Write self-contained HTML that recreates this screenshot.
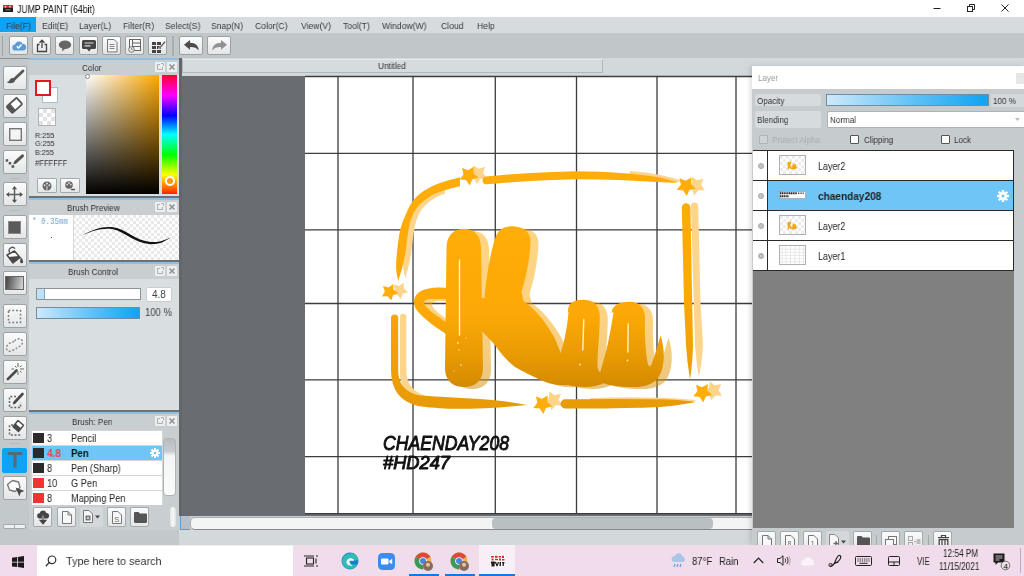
<!DOCTYPE html>
<html>
<head>
<meta charset="utf-8">
<title>JUMP PAINT</title>
<style>
*{box-sizing:border-box;margin:0;padding:0}
html,body{width:1024px;height:576px;overflow:hidden;background:#c3c8cb;font-family:"Liberation Sans",sans-serif;color:#222}
.abs{position:absolute}
svg{position:absolute;overflow:visible}
.tx{position:absolute;white-space:nowrap;transform-origin:0 0;line-height:1;will-change:transform}
#titlebar{left:0;top:0;width:1024px;height:17px;background:#fff}
#menubar{left:0;top:17px;width:1024px;height:16px;background:#d6dbde}
#menubar .tx{top:4px;font-size:9.5px;color:#3a3a3a;transform:scaleX(.905)}
#toolbar{left:0;top:33px;width:1024px;height:25px;background:#c1c6c9}
.tb{position:absolute;top:3px;width:19px;height:19px;border:1px solid #9ba0a3;border-radius:2px;background:linear-gradient(#fcfcfc,#e3e5e6)}
#lefttools{left:0;top:58px;width:29px;height:487px;background:#c3c8cb}
.lt{position:absolute;left:2.5px;width:24.5px;height:24px;border:1px solid #9da2a5;border-radius:2px;background:linear-gradient(#fbfbfb,#e4e6e7)}
.lsep{position:absolute;left:10px;width:10px;height:1px;background:#b4b9bc}
.pline{position:absolute;left:29px;width:150px;height:2px;background:#6e7174}
.phead{position:absolute;left:29px;width:150px;height:17px;background:#c9ced1;border-top:2px solid #8fbfe2}
.phead .tx{top:3px;font-size:9.5px;color:#333;transform:scaleX(.86)}
.pbody{position:absolute;left:29px;width:150px;background:#d9dee1}
.pb{position:absolute;top:2px;width:10px;height:10px;background:#eceeef;border-radius:1px}
#canvasarea{left:182px;top:58px;width:570px;height:472px;background:#696c70}
#taskbar{left:0;top:545px;width:1024px;height:31px;background:#f1dcec}
#layerpanel{left:752px;top:66px;width:272px;height:479px;background:#c6cbce;box-shadow:-2px 0 5px rgba(0,0,0,.13)}
</style>
</head>
<body>
<!-- TITLE BAR -->
<div id="titlebar" class="abs">
  <svg style="left:3px;top:4.500px" width="10" height="7" viewBox="0 0 10 7"><rect x="0" y="0" width="10" height="3.200" fill="#d8242b"/><rect x="0" y="3" width="10" height="4" fill="#1d1d1d"/><rect x="1.500" y=".8" width="1.800" height="1.600" fill="#fff" opacity=".7"/><rect x="6" y=".8" width="1.800" height="1.600" fill="#fff" opacity=".7"/><rect x="2.500" y="4.200" width="5" height="1.200" fill="#777"/></svg>
  <div class="tx" style="left:17px;top:3.5px;font-size:11px;color:#111;transform:scaleX(.79)">JUMP PAINT (64bit)</div>
  <svg style="left:930px;top:0" width="94" height="17" viewBox="0 0 94 17"><g stroke="#222" stroke-width="1" fill="none"><path d="M3.500 8.500h7"/><rect x="37.500" y="6.500" width="5" height="5"/><path d="M39.500 6.500v-2h5v5h-2"/><path d="M71.500 4.500l7 7M78.500 4.500l-7 7"/></g></svg>
</div>
<!-- MENU BAR -->
<div id="menubar" class="abs">
  <div class="abs" style="left:0;top:0;width:36px;height:15px;background:#0fa3f3"></div>
  <div class="tx" style="left:6px">File(F)</div><div class="tx" style="left:42px">Edit(E)</div><div class="tx" style="left:79px">Layer(L)</div><div class="tx" style="left:123px">Filter(R)</div><div class="tx" style="left:165px">Select(S)</div><div class="tx" style="left:211px">Snap(N)</div><div class="tx" style="left:255px">Color(C)</div><div class="tx" style="left:301px">View(V)</div><div class="tx" style="left:343px">Tool(T)</div><div class="tx" style="left:382px">Window(W)</div><div class="tx" style="left:441px">Cloud</div><div class="tx" style="left:477px">Help</div>
</div>
<!-- TOOLBAR -->
<div id="toolbar" class="abs">
  <div class="abs" style="left:2px;top:3px;width:1px;height:20px;background:#9da2a5"></div>
  <div class="tb" style="left:9px"><svg style="left:2px;top:3px" width="14" height="11" viewBox="0 0 14 11"><path d="M3.500 10.500a3 3 0 0 1-.4-6 4 4 0 0 1 7.600-.6 3.300 3.300 0 0 1 .3 6.600z" fill="#5b9bd5"/><path d="M4.800 6.200l1.700 1.800 3-3.400" stroke="#fff" stroke-width="1.500" fill="none"/></svg></div>
  <div class="tb" style="left:32.2px"><svg style="left:3px;top:2px" width="12" height="14" viewBox="0 0 12 14"><path d="M3.500 5.500h-2v7h9v-7h-2" stroke="#444" stroke-width="1.300" fill="none"/><path d="M6 9V1.500M3.500 3.800L6 1.200l2.500 2.600" stroke="#444" stroke-width="1.300" fill="none"/></svg></div>
  <div class="tb" style="left:55.4px"><svg style="left:2px;top:3px" width="14" height="12" viewBox="0 0 14 12"><ellipse cx="7" cy="4.800" rx="6.200" ry="4.300" fill="#666"/><path d="M4.500 7.500l-.5 4 3.500-3z" fill="#666"/></svg></div>
  <div class="tb" style="left:78.6px"><svg style="left:2px;top:3px" width="14" height="12" viewBox="0 0 14 12"><path d="M1.500 0h11a1.500 1.500 0 0 1 1.500 1.500v6a1.500 1.500 0 0 1-1.500 1.500H9l-2 2.500L5 9H1.500A1.500 1.500 0 0 1 0 7.500v-6A1.500 1.500 0 0 1 1.500 0z" fill="#444"/><path d="M2.500 3h9M2.500 5.800h6" stroke="#ddd" stroke-width="1.200"/></svg></div>
  <div class="tb" style="left:101.8px"><svg style="left:4px;top:2px" width="11" height="14" viewBox="0 0 11 14"><path d="M.5.500h6.500l3 3v9.500h-9.500z" fill="#f4f4f4" stroke="#777" stroke-width="1"/><path d="M2.500 5.500h5M2.500 7.500h5M2.500 9.500h5" stroke="#888" stroke-width="1"/></svg></div>
  <div class="tb" style="left:125px"><svg style="left:2px;top:2px" width="14" height="14" viewBox="0 0 14 14"><rect x="1.500" y=".5" width="11" height="11" fill="#f6f6f6" stroke="#666"/><path d="M4.500 .5v11M4.500 4h8M4.500 7.500h8" stroke="#666" stroke-width="1"/><circle cx="3.500" cy="10.500" r="2.800" fill="#eee" stroke="#666" stroke-width=".9"/><path d="M3.500 9v1.600h1.300" stroke="#666" stroke-width=".8" fill="none"/></svg></div>
  <div class="tb" style="left:148.2px"><svg style="left:2px;top:2px" width="15" height="14" viewBox="0 0 15 14"><g fill="#444"><rect x="1" y="3" width="4" height="3"/><rect x="6" y="3" width="4" height="3"/><rect x="1" y="7" width="4" height="3"/><rect x="6" y="7" width="4" height="3"/><rect x="1" y="11" width="4" height="3"/><rect x="6" y="11" width="4" height="3"/></g><path d="M8 8.500l5.500-6.500 1.300 1.200-5.600 6.300-1.800.6z" fill="#555" stroke="#e8e8e8" stroke-width=".6"/></svg></div>
  <div class="abs" style="left:171.5px;top:3px;width:2px;height:20px;background:#a9aeb1"></div>
  <div class="tb" style="left:179px;width:24px"><svg style="left:4px;top:3px" width="15" height="11" viewBox="0 0 15 11"><path d="M0 4.800L6 0v2.800c5 0 8.500 2.700 8.800 7.700C12.800 7.800 10 6.800 6 6.900v2.800z" fill="#4c4c4c"/></svg></div>
  <div class="tb" style="left:207px;width:24px"><svg style="left:4px;top:3px" width="15" height="11" viewBox="0 0 15 11"><path d="M15 4.800L9 0v2.800C4 2.800.5 5.500.2 10.500 2.200 7.800 5 6.800 9 6.900v2.800z" fill="#909396"/></svg></div>
</div>
<!-- LEFT TOOLS -->
<div id="lefttools" class="abs">
  <div class="abs" style="left:0;top:0;width:30px;height:1px;background:#8b9093"></div>
  <div class="lt" style="top:8px"><svg style="left:0;top:0" width="22" height="22" viewBox="0 0 22 22"><path d="M19 4L10.500 12" stroke="#555" stroke-width="2.800" stroke-linecap="round"/><path d="M10.200 11.300c-1.800-.9-4 0-4.600 1.600-.4 1.100-1.400 1.700-2.900 2 2.200 1.700 6 1.700 7.800-.2 1-1.100.8-2.500-.3-3.400z" fill="#555"/></svg></div>
  <div class="lt" style="top:36px"><svg style="left:0;top:0" width="22" height="22" viewBox="0 0 22 22"><g transform="translate(10.400,10.400) rotate(-42)"><rect x="-6.800" y="-4.300" width="13.600" height="8.600" rx="1.200" fill="#fdfdfd" stroke="#555" stroke-width="1.800"/><rect x="-6.800" y="-4.300" width="4.800" height="8.600" fill="#555"/></g></svg></div>
  <div class="lt" style="top:64px"><svg style="left:5px;top:5px" width="13" height="13" viewBox="0 0 13 13"><rect x=".7" y=".7" width="11.600" height="11.600" fill="#f4f4f4" stroke="#777" stroke-width="1.400"/></svg></div>
  <div class="lt" style="top:92px"><svg style="left:0;top:0" width="22" height="22" viewBox="0 0 22 22"><path d="M18.500 4.800L11.800 10.800" stroke="#555" stroke-width="3" stroke-linecap="round"/><path d="M9.300 13.200l.9-2.900 2.200 2.100z" fill="#555"/><g fill="#555"><rect x="1.700" y="8.200" width="2.500" height="2.500"/><rect x="4.700" y="11" width="2.500" height="2.500"/><rect x="7.600" y="14.200" width="2.600" height="2.600"/></g></svg></div>
  <div class="lsep" style="top:120px"></div>
  <div class="lt" style="top:124px"><svg style="left:2px;top:2.500px" width="17" height="17" viewBox="0 0 17 17"><path d="M8.500 1.500v14M1.500 8.500h14" stroke="#606060" stroke-width="1.500"/><path d="M8.500 0l2.600 3.200H5.900zM8.500 17l2.600-3.200H5.900zM0 8.500l3.200-2.600v5.200zM17 8.500l-3.200-2.600v5.200z" fill="#555"/></svg></div>
  <div class="lsep" style="top:152px"></div>
  <div class="lt" style="top:157px"><svg style="left:4.500px;top:4.500px" width="13" height="13" viewBox="0 0 13 13"><rect x=".5" y=".5" width="12" height="12" fill="#5a5a5a" stroke="#888" stroke-width="1"/></svg></div>
  <div class="lt" style="top:185px"><svg style="left:1px;top:2px" width="19" height="19" viewBox="0 0 19 19"><path d="M4.800 6.500a3 3 0 0 1 5.200-3.800" stroke="#555" stroke-width="1.300" fill="none"/><path d="M2 9l7.500-4 5.500 6.500-7 5.500z" fill="#fff" stroke="#4a4a4a" stroke-width="1.500" stroke-linejoin="round"/><path d="M3 11l11-1 1 1.500-7 5.500z" fill="#4a4a4a"/><path d="M15.800 11c1.500 1.500 2.300 3.400 2.300 4.700a1.500 1.500 0 0 1-3 0c0-1.200.3-2.800.7-4.700z" fill="#4a4a4a"/></svg></div>
  <div class="lt" style="top:213px"><div class="abs" style="left:1.500px;top:4px;width:18.500px;height:14px;border:1px solid #666;background:linear-gradient(100deg,#444,#d8d8d8)"></div></div>
  <div class="lsep" style="top:241px"></div>
  <div class="lt" style="top:246px"><svg style="left:3px;top:3.500px" width="15" height="15" viewBox="0 0 15 15"><rect x="1.500" y="1.500" width="12" height="12" fill="none" stroke="#777" stroke-width="1.500" stroke-dasharray="1.800 2"/></svg></div>
  <div class="lt" style="top:274px"><svg style="left:1px;top:3px" width="19" height="17" viewBox="0 0 19 17"><path d="M9.500 5C12 2 17 2 17.500 5.500c.4 3-3 5-5.500 6.500s-6 4-8.500 3S.8 11 3 8.500 7.500 7 9.500 5z" fill="none" stroke="#888" stroke-width="1.400" stroke-dasharray="2 1.700"/></svg></div>
  <div class="lt" style="top:302px"><svg style="left:2px;top:1.500px" width="18" height="18" viewBox="0 0 18 18"><path d="M1.800 16.200L10.500 7.500" stroke="#4a4a4a" stroke-width="2.600" stroke-linecap="round"/><path d="M12 0v4M12 8.500v3.500M8 6h-2.500M14 6h4M9 3l1.500 1.500M15.500 2.500L14 4M15.500 9.500L14 8" stroke="#666" stroke-width="1"/></svg></div>
  <div class="lt" style="top:330px"><svg style="left:3px;top:3px" width="18" height="17" viewBox="0 0 18 17"><path d="M9 4.500H2.500v11h11v-5" fill="none" stroke="#666" stroke-width="1.500" stroke-dasharray="2 1.700"/><path d="M7.500 10.500L15.500 2" stroke="#4a4a4a" stroke-width="2.600" stroke-linecap="round"/><path d="M5.800 12.500l.8-2.600 1.900 1.800z" fill="#4a4a4a"/></svg></div>
  <div class="lt" style="top:358px"><svg style="left:3px;top:2px" width="18" height="18" viewBox="0 0 18 18"><path d="M6 6H2.500v10h10v-2.500" fill="none" stroke="#666" stroke-width="1.500" stroke-dasharray="2 1.700"/><path d="M11 1.500l5.500 4.700-5 6.300-5.500-4.700z" fill="#fff" stroke="#4a4a4a" stroke-width="1.500" stroke-linejoin="round"/><path d="M6 7.800l2.500-3.200L14 9.300l-2.500 3.200z" fill="#4a4a4a"/></svg></div>
  <div class="lsep" style="top:385px"></div>
  <div class="lt" style="top:389.500px;left:2px;width:25px;height:25px;background:#0fa3f3;border-color:#0fa3f3"><svg style="left:4px;top:3px" width="16" height="16" viewBox="0 0 16 16"><path d="M.8 0h14.400v3H9.600V15.500H6.400V3H.8z" fill="#546b7b"/></svg></div>
  <div class="lt" style="top:418px"><svg style="left:2px;top:2px" width="20" height="20" viewBox="0 0 20 20"><path d="M6.500 1.500l6 1.500 1.500 5.500-5 4-5.500-1.500L1.500 5.500z" fill="#fff" stroke="#777" stroke-width="1.300" stroke-linejoin="round"/><path d="M9.500 8.500l9 3.500-3.800 1.500-1.200 4z" fill="#4a4a4a"/></svg></div>
  <div class="abs" style="left:3px;top:466px;width:23px;height:5px;border:1px solid #a4a9ac;border-radius:2px;background:#f0f1f2"></div>
  <div class="abs" style="left:14px;top:467px;width:1px;height:3px;background:#a4a9ac"></div>
</div>
<!-- LEFT PANELS -->
<div id="leftpanels">
  <div class="abs" style="left:178.500px;top:58px;width:3.500px;height:458px;background:#63666a"></div>
  <!-- Color -->
  <div class="phead" style="top:58px"><div class="tx" style="left:53px">Color</div>
    <div class="pb" style="left:126px"><svg style="left:2px;top:1px" width="7" height="7" viewBox="0 0 7 7"><path d="M3 1.500H.5v5h5V4" stroke="#aab0b3" fill="none"/><path d="M4 .5h2.500V3" stroke="#aab0b3" fill="none"/></svg></div>
    <div class="pb" style="left:138px"><svg style="left:2px;top:2px" width="6" height="6" viewBox="0 0 6 6"><path d="M.5.500l5 5M5.500.5l-5 5" stroke="#8e9497" stroke-width="1.600"/></svg></div>
  </div>
  <div class="pbody" style="top:75px;height:121px">
    <div class="abs" style="left:13px;top:12px;width:16px;height:16px;background:#fff;border:1px solid #9fc3c9"></div>
    <div class="abs" style="left:6px;top:5px;width:16px;height:16px;background:#fff;border:2px solid #e01b1b"></div>
    <svg style="left:9px;top:33px" width="18" height="18" viewBox="0 0 18 18"><rect x=".5" y=".5" width="17" height="17" fill="#fff" stroke="#aeb3b6"/><g fill="#e2e2e2"><rect x="5" y="1" width="4" height="4"/><rect x="13" y="1" width="4" height="4"/><rect x="1" y="5" width="4" height="4"/><rect x="9" y="5" width="4" height="4"/><rect x="5" y="9" width="4" height="4"/><rect x="13" y="9" width="4" height="4"/><rect x="1" y="13" width="4" height="4"/><rect x="9" y="13" width="4" height="4"/></g></svg>
    <div class="tx" style="left:6px;top:57px;font-size:8px;color:#333;transform:scaleX(.9)">R:255</div>
    <div class="tx" style="left:6px;top:65px;font-size:8px;color:#333;transform:scaleX(.9)">G:255</div>
    <div class="tx" style="left:6px;top:73.500px;font-size:8px;color:#333;transform:scaleX(.9)">B:255</div>
    <div class="tx" style="left:6px;top:83.500px;font-size:8.500px;color:#333;transform:scaleX(.9)">#FFFFFF</div>
    <div class="abs" style="left:8px;top:103px;width:20px;height:15px;border:1px solid #a4a9ac;border-radius:1px;background:linear-gradient(#fbfbfb,#e4e6e7)"><svg style="left:4px;top:2px" width="10" height="10" viewBox="0 0 10 10"><circle cx="5" cy="5" r="4.500" fill="#666"/><circle cx="5" cy="2.500" r="1" fill="#ddd"/><circle cx="2.600" cy="4.200" r="1" fill="#ddd"/><circle cx="7.400" cy="4.200" r="1" fill="#ddd"/><path d="M5 5v4.500" stroke="#ddd" stroke-width="1"/></svg></div>
    <div class="abs" style="left:31px;top:103px;width:20px;height:15px;border:1px solid #a4a9ac;border-radius:1px;background:linear-gradient(#fbfbfb,#e4e6e7)"><svg style="left:4px;top:2px" width="12" height="10" viewBox="0 0 12 10"><circle cx="4" cy="4" r="3.800" fill="#666"/><circle cx="4" cy="2" r=".9" fill="#ddd"/><circle cx="2.200" cy="3.600" r=".9" fill="#ddd"/><circle cx="5.800" cy="3.600" r=".9" fill="#ddd"/><path d="M6 8.500h4" stroke="#555" stroke-width="1.400"/></svg></div>
    <div class="abs" style="left:57px;top:0;width:73px;height:119px;background:linear-gradient(to bottom,rgba(0,0,0,0),#000),linear-gradient(to right,#fff,#ffa800)"></div>
    <div class="abs" style="left:56px;top:-1px;width:5px;height:5px;border-radius:50%;border:1px solid #888;background:#fff"></div>
    <div class="abs" style="left:133px;top:0;width:15px;height:119px;background:linear-gradient(to bottom,#ff0030 0%,#ff00ff 17%,#0000ff 34%,#00ffff 50%,#00ff00 67%,#ffff00 84%,#ff2000 100%)"></div>
    <div class="abs" style="left:136px;top:101px;width:10px;height:10px;border-radius:50%;border:2px solid #fff;background:#ff9800"></div>
  </div>
  <div class="pline" style="top:196px"></div>
  <!-- Brush Preview -->
  <div class="phead" style="top:198px"><div class="tx" style="left:38px">Brush Preview</div>
    <div class="pb" style="left:126px"><svg style="left:2px;top:1px" width="7" height="7" viewBox="0 0 7 7"><path d="M3 1.500H.5v5h5V4" stroke="#aab0b3" fill="none"/><path d="M4 .5h2.500V3" stroke="#aab0b3" fill="none"/></svg></div>
    <div class="pb" style="left:138px"><svg style="left:2px;top:2px" width="6" height="6" viewBox="0 0 6 6"><path d="M.5.500l5 5M5.500.5l-5 5" stroke="#8e9497" stroke-width="1.600"/></svg></div>
  </div>
  <div class="pbody" style="top:215px;height:45px;background:#fff">
    <svg style="left:44px;top:0" width="106" height="45" viewBox="0 0 106 45"><defs><pattern id="chk" width="6" height="6" patternUnits="userSpaceOnUse"><rect width="6" height="6" fill="#fff"/><rect width="3" height="3" fill="#e9e9e9"/><rect x="3" y="3" width="3" height="3" fill="#e9e9e9"/></pattern></defs><rect width="106" height="45" fill="url(#chk)"/><path d="M.5 0v45" stroke="#d8d8d8"/>
    <path d="M9 20.500C20 14 30 11 40 12.200c13 1.700 22 13.500 38 14.800 8 .5 15-2 20-5-6 5-13 7.500-20.500 7.200C61 28 52 16.500 40 14.200 30 12.500 20 15.500 9 20.500z" fill="#111"/></svg>
    <div class="tx" style="left:3px;top:3px;font-family:'Liberation Mono',monospace;font-size:8.500px;color:#6ea3d2;transform:scaleX(.88)">* 0.35mm</div>
    <div class="abs" style="left:22px;top:22px;width:1px;height:1px;background:#555"></div>
  </div>
  <div class="pline" style="top:260px"></div>
  <!-- Brush Control -->
  <div class="phead" style="top:262px"><div class="tx" style="left:38.500px">Brush Control</div>
    <div class="pb" style="left:126px"><svg style="left:2px;top:1px" width="7" height="7" viewBox="0 0 7 7"><path d="M3 1.500H.5v5h5V4" stroke="#aab0b3" fill="none"/><path d="M4 .5h2.500V3" stroke="#aab0b3" fill="none"/></svg></div>
    <div class="pb" style="left:138px"><svg style="left:2px;top:2px" width="6" height="6" viewBox="0 0 6 6"><path d="M.5.500l5 5M5.500.5l-5 5" stroke="#8e9497" stroke-width="1.600"/></svg></div>
  </div>
  <div class="pbody" style="top:279px;height:131px">
    <div class="abs" style="left:7px;top:9px;width:105px;height:12px;background:#fff;border:1px solid #8d9295"></div>
    <div class="abs" style="left:8px;top:10px;width:8px;height:10px;background:#bfe2f8;border-right:1px solid #7aa9c9"></div>
    <div class="abs" style="left:117px;top:8px;width:26px;height:15px;background:#fff;border:1px solid #c9cdd0;border-radius:2px"></div>
    <div class="tx" style="left:123px;top:11px;font-size:10px;color:#444">4.8</div>
    <div class="abs" style="left:7px;top:28px;width:104px;height:12px;border:1px solid #6f8ea3;background:linear-gradient(to right,#cfe9fb,#5dc0f6 55%,#10a2f2)"></div>
    <div class="tx" style="left:116px;top:29px;font-size:10px;color:#444;transform:scaleX(.95)">100 %</div>
  </div>
  <div class="pline" style="top:410px"></div>
  <!-- Brush list -->
  <div class="phead" style="top:412px"><div class="tx" style="left:43px">Brush: Pen</div>
    <div class="pb" style="left:126px"><svg style="left:2px;top:1px" width="7" height="7" viewBox="0 0 7 7"><path d="M3 1.500H.5v5h5V4" stroke="#aab0b3" fill="none"/><path d="M4 .5h2.500V3" stroke="#aab0b3" fill="none"/></svg></div>
    <div class="pb" style="left:138px"><svg style="left:2px;top:2px" width="6" height="6" viewBox="0 0 6 6"><path d="M.5.500l5 5M5.500.5l-5 5" stroke="#8e9497" stroke-width="1.600"/></svg></div>
  </div>
  <div class="pbody" id="brushbody" style="top:429px;height:101px;background:#c9ced1">
    <style>
      .br{position:absolute;left:3px;width:130px;height:14px;background:#fff}
      .br i{position:absolute;left:1px;top:2px;width:11px;height:10px;background:#2b2b2b}
      .br .tx{top:2px;font-size:10.500px;color:#222;transform:scaleX(.88)}
      .bb{position:absolute;top:78px;width:19px;height:20px;border:1px solid #a4a9ac;border-radius:2px;background:linear-gradient(#fbfbfb,#e4e6e7)}
    </style>
    <div class="abs" style="left:2px;top:1px;width:132px;height:75px;background:#d3d6d8"></div>
    <div class="br" style="top:2px"><i></i><div class="tx" style="left:15px">3</div><div class="tx" style="left:39px">Pencil</div></div>
    <div class="br" style="top:17px;background:#6fc5f6"><i></i><div class="tx" style="left:15px;color:#e8434f;font-weight:bold;transform:scaleX(.95)">4.8</div><div class="tx" style="left:39px;font-weight:bold;color:#111;transform:scaleX(.92)">Pen</div>
      <svg style="left:118px;top:2px" width="10" height="10" viewBox="-5 -5 10 10"><g fill="#fff"><circle r="3.300"/><g id="gt"><rect x="-1" y="-5" width="2" height="10"/><rect x="-1" y="-5" width="2" height="10" transform="rotate(45)"/><rect x="-1" y="-5" width="2" height="10" transform="rotate(90)"/><rect x="-1" y="-5" width="2" height="10" transform="rotate(135)"/></g></g><circle r="1.300" fill="#6fc5f6"/></svg></div>
    <div class="br" style="top:32px"><i></i><div class="tx" style="left:15px">8</div><div class="tx" style="left:39px">Pen (Sharp)</div></div>
    <div class="br" style="top:47px"><i style="background:#f03434"></i><div class="tx" style="left:15px">10</div><div class="tx" style="left:39px">G Pen</div></div>
    <div class="br" style="top:62px"><i style="background:#f03434"></i><div class="tx" style="left:15px">8</div><div class="tx" style="left:39px">Mapping Pen</div></div>
    <!-- scrollbar -->
    <div class="abs" style="left:134px;top:9px;width:13px;height:58px;border:1px solid #aeb3b6;border-radius:4px;background:linear-gradient(#b9bdc0 0,#c9ccce 22%,#f4f5f5 30%,#fbfbfb 100%)"></div>
    <!-- buttons -->
    <div class="bb" style="left:4px"><svg style="left:3px;top:3px" width="12" height="13" viewBox="0 0 12 13"><path d="M2.800 7.500a2.600 2.600 0 0 1-.2-5.200 3.500 3.500 0 0 1 6.700-.4 2.800 2.800 0 0 1 0 5.600z" fill="#444"/><path d="M6 5v7M3.500 9.500L6 12.500l2.500-3z" stroke="#444" stroke-width="1.600" fill="#444"/><path d="M6 4.500v4" stroke="#eee" stroke-width=".8"/></svg></div>
    <div class="bb" style="left:28px"><svg style="left:4px;top:3px" width="10" height="13" viewBox="0 0 10 13"><path d="M.5.500h5.500l3.500 3.500v8.500h-9z" fill="#f8f8f8" stroke="#777"/><path d="M6 .5v3.500h3.500" fill="none" stroke="#777"/></svg></div>
    <div class="abs" style="left:51px;top:78px;width:23px;height:20px;background:#d4d8db;border-radius:2px"><svg style="left:3px;top:3px" width="18" height="13" viewBox="0 0 18 13"><path d="M.5.500h5.500l3.500 3.500v8.500h-9z" fill="#f8f8f8" stroke="#777"/><rect x="2.500" y="5.500" width="5" height="5" fill="#777"/><rect x="4" y="7" width="2" height="2" fill="#ccc"/><path d="M12 5.500h5l-2.500 3z" fill="#444"/></svg></div>
    <div class="bb" style="left:78px"><svg style="left:4px;top:3px" width="10" height="13" viewBox="0 0 10 13"><path d="M.5.500h5.500l3.500 3.500v8.500h-9z" fill="#f8f8f8" stroke="#777"/><text x="2.300" y="10.500" font-family="Liberation Sans" font-size="7.500" fill="#666">S</text></svg></div>
    <div class="bb" style="left:101px"><svg style="left:3px;top:4px" width="13" height="11" viewBox="0 0 13 11"><path d="M0 1.200C0 .5.500 0 1.200 0h3.300l1.300 1.500h6C12.500 1.500 13 2 13 2.700v7.100c0 .7-.5 1.200-1.200 1.200H1.200C.5 11 0 10.500 0 9.800z" fill="#555"/></svg></div>
    <div class="abs" style="left:141px;top:78px;width:6px;height:20px;border-radius:3px;background:linear-gradient(to right,#e2e4e5,#f8f8f8,#dcdfe0)"></div>
  </div>
</div>
<!-- CANVAS AREA -->
<div id="canvasarea" class="abs">
  <div class="abs" style="left:0;top:0;width:842px;height:18px;background:#d3d8db"></div>
  <div class="abs" style="left:0;top:1px;width:421px;height:13.500px;background:#d6dbde;border:1px solid #b2b7ba;border-top-color:#e8ebec"><div class="tx" style="left:195px;top:2px;font-size:8.500px;color:#333;transform:scaleX(.97)">Untitled</div></div>
  <!-- canvas -->
  <svg id="art" style="left:0;top:0;will-change:transform" width="570" height="472" viewBox="182 58 570 472">
    <defs>
      <linearGradient id="og" gradientUnits="userSpaceOnUse" x1="0" y1="228" x2="0" y2="388"><stop offset="0" stop-color="#ffad0a"/><stop offset=".55" stop-color="#fca806"/><stop offset=".8" stop-color="#e89a02"/><stop offset="1" stop-color="#d38a00"/></linearGradient>
      <linearGradient id="fg" gradientUnits="userSpaceOnUse" x1="0" y1="170" x2="0" y2="410"><stop offset="0" stop-color="#ffad0a"/><stop offset=".5" stop-color="#fca906"/><stop offset="1" stop-color="#e69a06"/></linearGradient>
      <path id="star" d="M0.0 -10.0L3.1 -4.3L9.5 -3.1L5.0 1.6L5.9 8.1L0.0 5.3L-5.9 8.1L-5.0 1.6L-9.5 -3.1L-3.1 -4.3z" stroke-linejoin="round" stroke-width="1.2"/>
    </defs>
    <rect x="305" y="76" width="450" height="438" fill="#fff"/>
    <g stroke="#3b3d41" stroke-width="1.300" fill="none">
      <path d="M305 76.500h450M305 153.300h450M305 229.800h450M305 303.500h450M305 379.800h450M305 456.600h450M305 513.600h450"/>
      <path d="M338 76v438M413 76v438M495.300 76v438M576.500 76v438M657 76v438M736 76v438"/>
    </g>
    <g id="frame">
      <!-- light shadows -->
      <g fill="#fdd48c">
        <path d="M445.0 188.0C442.8 188.5 436.2 189.2 432.0 191.0C427.8 192.8 423.5 195.3 420.0 199.0C416.5 202.7 413.3 207.5 411.0 213.0C408.7 218.5 407.2 225.5 406.0 232.0C404.8 238.5 404.0 246.3 403.5 252.0C403.0 257.7 402.7 261.6 403.0 266.0C403.3 270.4 405.1 276.4 405.5 278.5L405.5 278.5C406.3 275.1 409.1 264.6 410.3 258.3C411.5 252.0 411.8 246.3 412.6 240.9C413.4 235.5 413.8 230.5 415.0 225.7C416.2 220.9 417.8 215.9 420.0 212.0C422.2 208.1 425.2 205.2 428.4 202.5C431.6 199.8 436.2 197.4 439.0 196.0C441.8 194.6 444.0 194.2 445.0 193.8Z"/>
        <path d="M630 171Q662 173.500 682 181L672 183Q655 177 630 175.500Z"/>
        <path d="M691 206a3.600 3.600 0 0 1 7.200 0L700.500 303L703 345Q702 364 698.800 377Q696 360 695 345Z"/>
        <path d="M400 317a3.200 3.200 0 0 1 6.400 0V372Q407 390 426 396L418 401Q399.500 392 400 372Z"/>
        <path d="M590 398Q650 396 696 400L690 403Q650 400 590 402Z"/>
        <use href="#star" transform="translate(478,174) rotate(188)"/>
        <use href="#star" transform="translate(696,185.500) rotate(190)"/>
        <use href="#star" transform="translate(399.500,290.500) rotate(172) scale(.88)"/>
        <use href="#star" transform="translate(553.500,400.500) rotate(192)"/>
        <use href="#star" transform="translate(713.500,390.500) rotate(194)"/>
      </g>
      <g fill="url(#fg)">
        <path d="M460.0 177.5C459.4 177.6 460.1 177.2 456.6 178.2C453.1 179.1 444.6 181.1 439.2 183.2C433.8 185.3 428.3 187.9 424.0 190.8C419.7 193.7 416.3 196.6 413.2 200.6C410.1 204.6 407.8 210.0 405.6 214.9C403.4 219.8 401.6 223.8 400.2 230.0C398.8 236.2 397.7 245.3 397.0 251.8C396.3 258.3 396.0 264.1 396.2 269.0C396.4 273.9 397.9 279.0 398.2 281.0L398.2 281.0C398.9 278.7 401.2 271.9 402.4 267.0C403.6 262.1 404.7 257.2 405.6 251.8C406.5 246.4 406.9 239.8 407.8 234.4C408.7 229.0 409.4 223.7 411.0 219.2C412.6 214.7 414.6 210.9 417.5 207.3C420.4 203.7 424.8 200.0 428.4 197.5C432.0 195.0 434.5 193.9 439.2 192.1C443.9 190.3 453.1 187.8 456.6 186.9C460.1 186.0 459.4 186.8 460.0 186.8Z"/>
        <path d="M486 176.500Q530 172.300 576 171.300Q625 171.800 657 177Q670 179.500 678 182.500Q666 182.500 657 182Q620 179.500 576 179.200Q530 180.300 487 184.300A3.900 3.900 0 0 1 486 176.500Z"/>
        <path d="M681.800 207.500a4.300 4.300 0 0 1 8.600 0L692.200 303L693 345Q692.500 364 690 379.500Q687 362 686 345L684 303Z"/>
        <path d="M391 318a3.600 3.600 0 0 1 7.200 0V370Q398 391 420 395.500Q450 397.500 480 399Q505 400.500 527 405Q500 408 470 408.800Q440 409.300 418 406Q391 399.500 391 370Z"/>
        <path d="M565 399.300Q620 398.600 660 399.300Q682 400 696 402Q680 405.500 660 407Q620 408.800 565 408.400A4.500 4.500 0 0 1 565 399.300Z"/>
        <use href="#star" transform="translate(468.700,175.500) rotate(174)"/>
        <use href="#star" transform="translate(686,186) rotate(176)"/>
        <use href="#star" transform="translate(389.500,292) rotate(168) scale(.88)"/>
        <use href="#star" transform="translate(542.500,404) rotate(175)"/>
        <use href="#star" transform="translate(702.500,392.500) rotate(176)"/>
      </g>
    </g>
    <g id="letters">
      <defs>
        <g id="kee">
          <!-- K loop -->
          <path d="M450 288C440 286.800 428 287.300 421 291C413 295.500 412 304 417 310.500C424 319 436 328 450 336.500L450 324.500C440 318.500 430 311.500 425.500 306C422.500 302 424 299.500 430 299L450 299Z"/>
          <!-- K stem -->
          <path d="M446.500 248C446.500 236 453 229 464 229C475 229 481 236 481 248L483 368C483 380 476 387 464 387C452 387 445 380 445 368Z"/>
          <!-- K arms -->
          <path d="M484.500 298C486 280 490 252 496 236C499 229 505 226.400 511 226.200C522 226 530.500 231 530.500 241C530 258 526 278 521.500 292L523.500 301C534 308 546 322 553.500 336C557.500 344 560 351 562.500 358L568 385C558 386 550 384 543 381C532 376 522 371 515 367C506 360 499 351 495 345L481 330V298Z"/>
          <!-- e1 -->
          <path d="M568 312C567.500 303 574 299.800 583.500 299.800C593 299.800 600 305 599.800 318C599.500 338 597 356 597.500 366C598 371 599.500 372.500 601.500 372L606 382C599 386 591 387 584 387C572 387 560 384 556 378L561 352C565 340 567.500 324 568.500 312Z"/>
          <!-- e2 -->
          <path d="M611.500 313C612 305 620 301.800 629.500 301.800C639 301.800 645 308 645 318C644.500 336 645.500 350 647.500 362C648.500 367 650 367.500 651.500 364.500C654 358 657 348 660.500 335.500C665.500 350 665 368 658 378C652 385.500 642 387.500 632 387C620 387 604 385.500 598 380L602 366C607 350 611 330 613.500 312Z"/>
        </g>
      </defs>
      <use href="#kee" transform="translate(8,2)" fill="url(#og)" opacity=".5"/>
      <use href="#kee" fill="url(#og)"/>
      <g stroke="#fff2cc" stroke-width="1.400" stroke-linecap="round" fill="none">
        <path d="M459.500 260V335"/><path d="M583.800 319.500L582.800 350"/><path d="M628.200 324L627.800 352"/>
      </g>
      <g fill="#ffe9b0"><circle cx="458" cy="343" r=".9"/><circle cx="461" cy="365" r=".8"/><circle cx="459" cy="350" r=".7"/><circle cx="580" cy="364.500" r=".9"/><circle cx="627.500" cy="360.500" r=".9"/><circle cx="466" cy="338" r=".6"/><circle cx="454" cy="371" r=".6"/></g>
    </g>
    <g id="sig" font-family="Liberation Sans, sans-serif" font-style="italic" fill="#111" stroke="#111" stroke-width=".95" stroke-linejoin="round">
      <text x="383" y="449.500" font-size="19.500" textLength="126" lengthAdjust="spacingAndGlyphs">CHAENDAY208</text>
      <text x="383" y="468.500" font-size="18" textLength="67" lengthAdjust="spacingAndGlyphs">#HD247</text>
    </g>
  </svg>
  <!-- h scrollbar -->
  <div class="abs" style="left:-3px;top:458px;width:573px;height:14px;background:#c9ced1"></div>
  <div class="abs" style="left:-2px;top:458px;width:10px;height:14px;background:#b7c0c8;border-left:1px solid #5d9bd0;border-bottom:1px solid #5d9bd0"></div>
  <div class="abs" style="left:8px;top:459px;width:566px;height:12.500px;background:#f3f4f4;border:1px solid #a9aeb1;border-bottom-color:#85898c;border-radius:5px 0 0 5px"></div>
  <div class="abs" style="left:310px;top:459.500px;width:221px;height:11.500px;background:#babfc2;border-radius:4px"></div>
  <div class="abs" style="left:-3px;top:472px;width:573px;height:15px;background:#d3d8db"></div>
</div>
<!-- LAYER PANEL -->
<div id="layerpanel" class="abs">
  <style>
    #layerpanel .tx{font-size:9.500px;color:#333;transform:scaleX(.85)}
    .lrow{position:absolute;left:1px;width:261px;height:30px;background:#fff;border-bottom:1px solid #2a2a2a}
    .lrow .eye{position:absolute;left:5px;top:12px;width:6px;height:6px;border-radius:50%;background:#c4c4c4;border:1px solid #a8a8a8}
    .lrow .th{position:absolute;left:26px;top:4px;width:27px;height:20px;border:1px solid #b0b0b0}
    .lrow .tx{left:65px;top:10px;font-size:10.500px!important;color:#222!important}
    .cb{position:absolute;top:69px;width:9px;height:9px;background:#fff;border:1px solid #555;border-radius:1px}
    .lb{position:absolute;top:464.5px;width:19px;height:20px;border:1px solid #a4a9ac;border-radius:2px;background:linear-gradient(#fbfbfb,#e4e6e7)}
  </style>
  <div class="abs" style="left:0;top:0;width:272px;height:23px;background:#fff"></div>
  <div class="tx" style="left:6px;top:7px;color:#9a9a9a!important">Layer</div>
  <div class="abs" style="left:264px;top:7px;width:8px;height:11px;background:#e6e6e6"></div>
  <div class="abs" style="left:3px;top:28px;width:66px;height:12px;background:#d6dbde;border-radius:2px"></div>
  <div class="tx" style="left:5px;top:30px">Opacity</div>
  <div class="abs" style="left:74px;top:28px;width:163px;height:12px;border:1px solid #6f8ea3;background:linear-gradient(to right,#cfe9fb,#5dc0f6 55%,#10a2f2)"></div>
  <div class="abs" style="left:239px;top:28px;width:33px;height:13px;background:#d3d8db;border-radius:2px"></div><div class="tx" style="left:241px;top:30px">100 %</div>
  <div class="abs" style="left:3px;top:45px;width:66px;height:17px;background:#d6dbde;border-radius:2px"></div>
  <div class="tx" style="left:5px;top:49px">Blending</div>
  <div class="abs" style="left:75px;top:45px;width:197px;height:17px;background:#fff;border:1px solid #aeb3b6;border-right:none;border-radius:2px 0 0 2px"></div>
  <div class="tx" style="left:78px;top:49px">Normal</div>
  <svg style="left:263px;top:52px" width="5" height="3" viewBox="0 0 5 3"><path d="M0 0h5L2.500 3z" fill="#bbb"/></svg>
  <div class="cb" style="left:7px;border-color:#aeb3b6;background:#cfd3d6"></div><div class="tx" style="left:20px;top:69px;color:#a9aeb1!important">Protect Alpha</div>
  <div class="cb" style="left:98px"></div><div class="tx" style="left:112px;top:69px">Clipping</div>
  <div class="cb" style="left:189px"></div><div class="tx" style="left:202px;top:69px">Lock</div>
  <!-- list -->
  <div class="abs" style="left:1px;top:84px;width:261px;height:378px;background:#808080"></div>
  <div class="abs" style="left:1px;top:84px;width:261px;height:1px;background:#2a2a2a"></div>
  <div class="lrow" style="top:85px"><div class="eye"></div><div class="th" id="th1"><svg style="left:0;top:0" width="25" height="18" viewBox="0 0 25 18"><defs><pattern id="chk2" width="6" height="6" patternUnits="userSpaceOnUse"><rect width="6" height="6" fill="#fff"/><rect width="3" height="3" fill="#ececec"/><rect x="3" y="3" width="3" height="3" fill="#ececec"/></pattern></defs><rect width="25" height="18" fill="url(#chk2)"/><path d="M8.500 6.500v6M10.500 6.500l-1.500 3 2.500 3M12.500 12.500c1-.5 1.500-2.500 1-3.500-.8 1-.8 3 .3 3.500 1-.3 1.700-2.500 1.200-3.500-.8 1-.8 3 .3 3.500l1-1" stroke="#f0a51a" stroke-width="1.700" fill="none" stroke-linecap="round"/></svg></div><div class="tx">Layer2</div></div>
  <div class="lrow" style="top:115px;background:linear-gradient(to right,#fff 15px,#6fc5f6 15px)"><div class="eye"></div><div class="th" id="th2" style="border:none"><svg style="left:0;top:6px" width="27" height="8" viewBox="0 0 27 8"><rect width="27" height="8" fill="#fff"/><rect x=".3" y=".3" width="26.400" height="7.400" fill="none" stroke="#6d7f8c" stroke-width=".6"/><path d="M1 2.200h17M1 5.200h9" stroke="#222" stroke-width="2" stroke-dasharray="1.300 .5"/><path d="M19 2.200h6" stroke="#444" stroke-width="1.600" stroke-dasharray="1 .6"/></svg></div><div class="tx" style="font-weight:bold;transform:scaleX(.96)">chaenday208</div>
     <svg style="left:244px;top:9px" width="12" height="12" viewBox="-6 -6 12 12"><g fill="#fff"><circle r="3.900"/><rect x="-1.200" y="-6" width="2.400" height="12"/><rect x="-1.200" y="-6" width="2.400" height="12" transform="rotate(45)"/><rect x="-1.200" y="-6" width="2.400" height="12" transform="rotate(90)"/><rect x="-1.200" y="-6" width="2.400" height="12" transform="rotate(135)"/></g><circle r="1.500" fill="#6fc5f6"/></svg></div>
  <div class="lrow" style="top:145px"><div class="eye"></div><div class="th" id="th3"><svg style="left:0;top:0" width="25" height="18" viewBox="0 0 25 18"><defs><pattern id="chk3" width="6" height="6" patternUnits="userSpaceOnUse"><rect width="6" height="6" fill="#fff"/><rect width="3" height="3" fill="#ececec"/><rect x="3" y="3" width="3" height="3" fill="#ececec"/></pattern></defs><rect width="25" height="18" fill="url(#chk3)"/><path d="M8.500 6.500v6M10.500 6.500l-1.500 3 2.500 3M12.500 12.500c1-.5 1.500-2.500 1-3.500-.8 1-.8 3 .3 3.500 1-.3 1.700-2.500 1.200-3.500-.8 1-.8 3 .3 3.500l1-1" stroke="#f0a51a" stroke-width="1.700" fill="none" stroke-linecap="round"/></svg></div><div class="tx">Layer2</div></div>
  <div class="lrow" style="top:175px"><div class="eye"></div><div class="th" id="th4"><svg style="left:0;top:0" width="25" height="18" viewBox="0 0 25 18"><rect width="25" height="18" fill="#fff"/><path d="M2 0v18M6 0v18M10.500 0v18M15 0v18M19.500 0v18M23.500 0v18M0 3.200h25M0 6.400h25M0 9.500h25M0 12.700h25M0 15.800h25" stroke="#e4e4e4" stroke-width=".8"/></svg></div><div class="tx">Layer1</div></div>
  <div class="abs" style="left:15px;top:85px;width:1px;height:120px;background:#2a2a2a"></div><div class="abs" style="left:261px;top:85px;width:1px;height:120px;background:#2a2a2a"></div><div class="abs" style="left:263px;top:92px;width:9px;height:1px;background:#9a9fa2"></div><div class="abs" style="left:263px;top:92px;width:1px;height:370px;background:#a9aeb1"></div>
  <div class="abs" style="left:262px;top:84px;width:10px;height:378px;background:#c6cbce"></div>
  <!-- bottom buttons -->
  <div class="lb" style="left:5px"><svg style="left:4px;top:3px" width="10" height="13" viewBox="0 0 10 13"><path d="M.5.500h5.500l3.500 3.500v8.500h-9z" fill="#f8f8f8" stroke="#777"/><path d="M6 .5v3.500h3.500" fill="none" stroke="#777"/></svg></div>
  <div class="lb" style="left:28px"><svg style="left:4px;top:3px" width="10" height="13" viewBox="0 0 10 13"><path d="M.5.500h5.500l3.500 3.500v8.500h-9z" fill="#f8f8f8" stroke="#777"/><text x="2.500" y="10.500" font-family="Liberation Sans" font-size="7" fill="#666">8</text></svg></div>
  <div class="lb" style="left:51px"><svg style="left:4px;top:3px" width="10" height="13" viewBox="0 0 10 13"><path d="M.5.500h5.500l3.500 3.500v8.500h-9z" fill="#f8f8f8" stroke="#777"/><text x="2.800" y="10.500" font-family="Liberation Sans" font-size="7" fill="#666">1</text></svg></div>
  <div class="abs" style="left:74px;top:464.500px;width:23px;height:20px;background:#d4d8db;border-radius:2px"><svg style="left:3px;top:3px" width="18" height="13" viewBox="0 0 18 13"><path d="M.5.500h5.500l3.500 3.500v8.500h-9z" fill="#f8f8f8" stroke="#888"/><path d="M7 7v5M4.500 9.500h5" stroke="#666" stroke-width="1.300"/><path d="M12 6.500h5l-2.500 3z" fill="#444"/></svg></div>
  <div class="lb" style="left:101px"><svg style="left:3px;top:4px" width="13" height="11" viewBox="0 0 13 11"><path d="M0 1.200C0 .5.500 0 1.200 0h3.300l1.300 1.500h6C12.500 1.500 13 2 13 2.700v7.100c0 .7-.5 1.200-1.200 1.200H1.200C.5 11 0 10.500 0 9.800z" fill="#555"/></svg></div>
  <div class="abs" style="left:124px;top:469px;width:1px;height:10px;background:#a4a9ac"></div>
  <div class="lb" style="left:129px"><svg style="left:3px;top:4px" width="12" height="12" viewBox="0 0 12 12"><rect x="3.500" y=".5" width="8" height="8" fill="#f8f8f8" stroke="#777"/><rect x=".5" y="3.500" width="8" height="8" fill="#f8f8f8" stroke="#777"/></svg></div>
  <div class="lb" style="left:152px"><svg style="left:3px;top:4px" width="13" height="12" viewBox="0 0 13 12"><rect x=".5" y=".5" width="4" height="4" fill="none" stroke="#aaa"/><rect x=".5" y="6.500" width="4" height="4" fill="none" stroke="#aaa"/><path d="M6 5.500h2" stroke="#aaa"/><rect x="8.500" y="3" width="4" height="5" fill="#bbb"/></svg></div>
  <div class="abs" style="left:176px;top:469px;width:1px;height:10px;background:#a4a9ac"></div>
  <div class="lb" style="left:181px"><svg style="left:4px;top:3px" width="11" height="14" viewBox="0 0 11 14"><path d="M0 2.500h11M3.500 2.500v-2h4v2" stroke="#444" stroke-width="1.200" fill="none"/><path d="M1.200 4.500h8.600v9H1.200z" fill="none" stroke="#444" stroke-width="1.300"/><path d="M4 5v8M7 5v8" stroke="#444" stroke-width="1.200"/></svg></div>
</div>
<!-- TASKBAR -->
<div id="taskbar" class="abs">
  <svg style="left:12px;top:11px" width="12" height="12" viewBox="0 0 12 12"><path d="M0 1.700L5 1v4.700H0zM5.800.9L12 0v5.700H5.800zM0 6.400h5v4.700l-5-.7zM5.800 6.400H12V12l-6.200-.9z" fill="#1a1a1a"/></svg>
  <div class="abs" style="left:37px;top:0;width:256px;height:31px;background:#fff;border-top:1px solid #eee"></div>
  <svg style="left:45px;top:10px" width="12" height="12" viewBox="0 0 12 12"><circle cx="7" cy="4.800" r="3.800" fill="none" stroke="#333" stroke-width="1.200"/><path d="M4.300 7.500L.8 11.200" stroke="#333" stroke-width="1.300"/></svg>
  <div class="tx" style="left:66px;top:11px;font-size:11.500px;color:#333;transform:scaleX(.94)">Type here to search</div>
  <!-- task view -->
  <svg style="left:304px;top:10px" width="14" height="12" viewBox="0 0 14 12"><g fill="none" stroke="#222" stroke-width="1.100"><rect x="2.500" y="3" width="7" height="6"/><path d="M0 1h10M0 11h10M12 1h2M12 11h2M12 3.500v5"/></g></svg>
  <!-- edge -->
  <svg style="left:341px;top:7px" width="18" height="18" viewBox="0 0 18 18"><circle cx="9" cy="9" r="8.500" fill="#1b7fd0"/><path d="M1 10C1 4 6 .8 10.500 1.300c4 .5 6.600 3.300 6.800 7H8.500c0 2.500 2 4.500 5 4.500 1.200 0 2.200-.3 3-.8-1.300 3-4.300 4.800-7.500 4.800A8 8 0 0 1 1 10z" fill="#35c1b0" opacity=".9"/><path d="M5.500 9.500c.2-2 2-3.300 4-3.300s3.500 1 3.800 2.600H8.500c-.5 2 .7 4 3 4.700-3.500.8-6.300-1-6-4z" fill="#fff" opacity=".95"/></svg>
  <!-- zoom -->
  <svg style="left:378px;top:8px" width="17" height="17" viewBox="0 0 17 17"><rect width="17" height="17" rx="4.500" fill="#3c8bf0"/><rect x="3" y="5.500" width="7.500" height="6" rx="1.200" fill="#fff"/><path d="M11.200 7.800l3-2v5.400l-3-2z" fill="#fff"/></svg>
  <!-- chrome x2 -->
  <svg style="left:414px;top:7px" width="20" height="20" viewBox="0 0 20 20"><circle cx="9" cy="9" r="8.500" fill="#e8b54a"/><path d="M9 9L1.700 4.800A8.500 8.500 0 0 1 16.400 4.800z" fill="#dc4a3d"/><path d="M9 9L1.700 4.800A8.500 8.500 0 0 0 9 17.500z" fill="#3b9a55" transform="rotate(0 9 9)"/><circle cx="9" cy="9" r="3.800" fill="#fff"/><circle cx="9" cy="9" r="3" fill="#4a86e0"/><circle cx="14" cy="14" r="5" fill="#8b6a5c"/><circle cx="14" cy="12.800" r="2" fill="#e7c3ae"/></svg>
  <svg style="left:450px;top:7px" width="20" height="20" viewBox="0 0 20 20"><circle cx="9" cy="9" r="8.500" fill="#e8b54a"/><path d="M9 9L1.700 4.800A8.500 8.500 0 0 1 16.400 4.800z" fill="#dc4a3d"/><path d="M9 9L1.700 4.800A8.500 8.500 0 0 0 9 17.500z" fill="#3b9a55"/><circle cx="9" cy="9" r="3.800" fill="#fff"/><circle cx="9" cy="9" r="3" fill="#4a86e0"/><circle cx="14" cy="14" r="5" fill="#8b6a5c"/><circle cx="14" cy="12.800" r="2" fill="#e7c3ae"/></svg>
  <!-- jump -->
  <div class="abs" style="left:479px;top:0;width:36px;height:31px;background:#f8eff6"></div>
  <svg style="left:490px;top:10px" width="15" height="12" viewBox="0 0 15 12"><rect width="15" height="12" fill="#fff"/><path d="M1 1h3v1.500H1zM5 .8h2.500v2H5zM8.500 1h2.500v1.500H8.500zM12 .8h2v2.200h-2zM1.500 3.500h2v2h-2zM5 3.800h3v1.500H5zM9 3.500h2v2H9zM12 4h2.500v1.500H12z" fill="#d8242b"/><path d="M1.500 7h3v1h-3zM2 8.500h2v2.500H2zM5.500 7l1.500 4M8.500 7l-1.500 4" fill="#1d1d1d" stroke="#1d1d1d" stroke-width="1.200"/><path d="M9.500 7h1.500v4H9.500zM12 7h2.500v1.200H12zM12.600 8h1.300v3h-1.300z" fill="#1d1d1d"/></svg>
  <div class="abs" style="left:409px;top:28.500px;width:30px;height:2.500px;background:#1f76d8"></div>
  <div class="abs" style="left:445px;top:28.500px;width:30px;height:2.500px;background:#1f76d8"></div>
  <div class="abs" style="left:479px;top:28.500px;width:36px;height:2.500px;background:#1f76d8"></div>
  <!-- tray -->
  <svg style="left:671px;top:8px" width="15" height="16" viewBox="0 0 15 16"><path d="M3.500 9a3 3 0 0 1 .3-6A4 4 0 0 1 11.500 3.500a2.800 2.800 0 0 1 .3 5.500z" fill="#a9c6e8"/><path d="M4 11l-1 3M7 11l-1 3M10 11l-1 3" stroke="#6aa0dc" stroke-width="1.300"/></svg>
  <div class="tx" style="left:692px;top:11px;font-size:10.500px;color:#222;transform:scaleX(.9)">87°F</div>
  <div class="tx" style="left:719px;top:11px;font-size:10.500px;color:#222;transform:scaleX(.9)">Rain</div>
  <svg style="left:753px;top:12px" width="11" height="7" viewBox="0 0 11 7"><path d="M.8 6L5.500 1.200 10.200 6" stroke="#222" stroke-width="1.200" fill="none"/></svg>
  <svg style="left:777px;top:10px" width="13" height="11" viewBox="0 0 13 11"><path d="M.5 3.500h2.500l3-2.800v9.600l-3-2.800H.5z" fill="none" stroke="#222" stroke-width="1"/><path d="M8 3.500c.8.600.8 3.400 0 4M9.800 2c1.600 1.600 1.600 5.400 0 7" stroke="#222" stroke-width="1" fill="none"/><path d="M11.600 .8c2 2.300 2 7 0 9.400" stroke="#999" stroke-width=".8" fill="none"/></svg>
  <svg style="left:801px;top:11px" width="14" height="10" viewBox="0 0 14 10"><path d="M3 9.500a2.800 2.800 0 0 1 .2-5.600 3.800 3.800 0 0 1 7.300-.3 3 3 0 0 1 .3 5.900z" fill="#fbf3f9"/></svg>
  <svg style="left:828px;top:9px" width="14" height="14" viewBox="0 0 14 14"><path d="M2 12c2.500.5 4-1.500 5-4s2-6 4-6.500 2.500 2 .5 4.500-5 4-7 4.500M7 8c1 .8 2.500.5 3.500-.5" stroke="#222" stroke-width="1.200" fill="none"/><circle cx="2.500" cy="11" r="1.600" fill="none" stroke="#222" stroke-width="1"/></svg>
  <svg style="left:855px;top:11px" width="17" height="10" viewBox="0 0 17 10"><rect x=".5" y=".5" width="16" height="9" rx="1" fill="none" stroke="#222"/><path d="M2.500 3h12M2.500 5h12" stroke="#222" stroke-width="1" stroke-dasharray="1.200 1"/><path d="M4.500 7.300h8" stroke="#222"/></svg>
  <svg style="left:888px;top:11px" width="12" height="10" viewBox="0 0 12 10"><rect x=".5" y=".5" width="11" height="9" rx="1" fill="none" stroke="#222"/><path d="M.5 6h11M6 6v3.500" stroke="#222"/></svg>
  <div class="tx" style="left:917px;top:12px;font-size:10px;color:#222;transform:scaleX(.78)">VIE</div>
  <div class="tx" style="left:943px;top:4px;font-size:10px;color:#222;transform:scaleX(.82)">12:54 PM</div>
  <div class="tx" style="left:939px;top:17px;font-size:10px;color:#222;transform:scaleX(.82)">11/15/2021</div>
  <svg style="left:993px;top:8px" width="18" height="18" viewBox="0 0 18 18"><path d="M.5.500h11v9H5l-2.500 2.500V9.500h-2z" fill="#1a1a1a"/><path d="M2.500 3h7M2.500 5h7M2.500 7h4" stroke="#f1dcec" stroke-width=".8"/><circle cx="12.500" cy="12.500" r="4.300" fill="#e9e2e8" stroke="#555" stroke-width=".8"/><text x="10.400" y="15.600" font-family="Liberation Sans" font-size="8" fill="#111">4</text></svg>
  <div class="abs" style="left:1020px;top:3px;width:1px;height:25px;background:#bfaaba"></div>
</div>
</body>
</html>
